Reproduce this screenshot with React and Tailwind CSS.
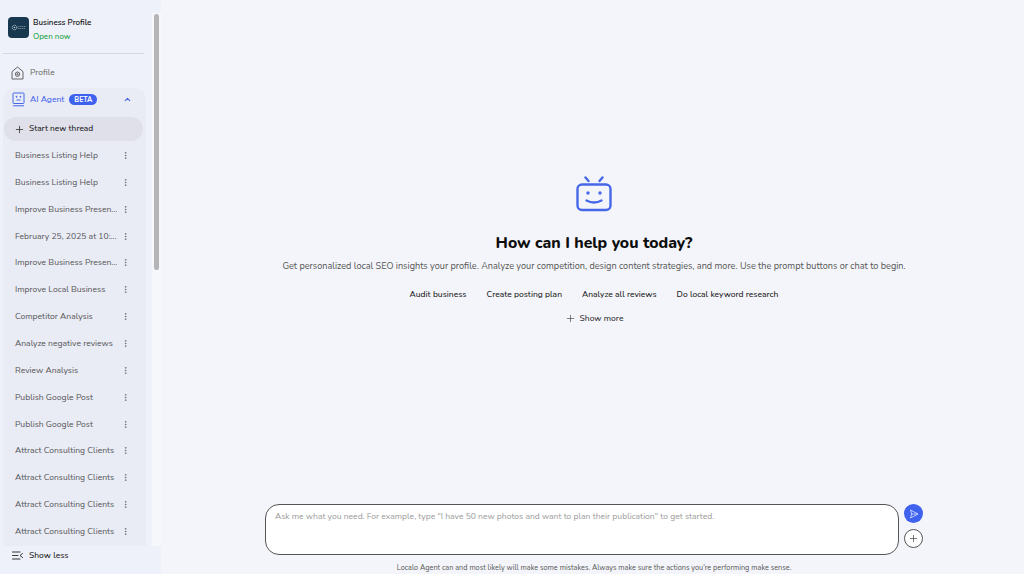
import { Plus, EllipsisVertical, ChevronUp } from "lucide-react";

const threads = [
  "Business Listing Help",
  "Business Listing Help",
  "Improve Business Presen...",
  "February 25, 2025 at 10:...",
  "Improve Business Presen...",
  "Improve Local Business",
  "Competitor Analysis",
  "Analyze negative reviews",
  "Review Analysis",
  "Publish Google Post",
  "Publish Google Post",
  "Attract Consulting Clients",
  "Attract Consulting Clients",
  "Attract Consulting Clients",
  "Attract Consulting Clients",
];

const prompts = ["Audit business", "Create posting plan", "Analyze all reviews", "Do local keyword research"];

function LogoMark() {
  return (
    <svg width="21" height="21" viewBox="0 0 21 21" fill="none">
      <rect width="21" height="21" rx="4" fill="#17384f" />
      <circle cx="6.500" cy="10.500" r="2.300" stroke="#c3ced6" strokeWidth="0.900" strokeDasharray="1.200 0.500" />
      <circle cx="6.500" cy="10.500" r="0.800" fill="#c3ced6" />
      <path d="M10 9.500h8M10 11.500h7" stroke="#7f95a4" strokeWidth="0.800" strokeDasharray="1.500 0.500" />
    </svg>
  );
}

function ProfileIcon() {
  return (
    <svg width="13" height="14" viewBox="0 0 13 14" fill="none" stroke="#555555" strokeWidth="0.900" strokeLinejoin="round">
      <path d="M1 5.600 6.500 1 12 5.600V13H1z" />
      <circle cx="6.500" cy="8.200" r="2.200" />
      <circle cx="6.500" cy="8.200" r="0.700" />
    </svg>
  );
}

function AgentSmallIcon() {
  return (
    <svg width="13" height="15" viewBox="0 0 13 15" fill="none" stroke="#4668e8" strokeWidth="1">
      <rect x="1" y="1" width="11" height="10.500" rx="0.800" />
      <circle cx="4.600" cy="4.800" r="0.500" fill="#4668e8" />
      <circle cx="8.400" cy="4.800" r="0.500" fill="#4668e8" />
      <path d="M4.500 8h4" />
      <path d="M1 13.800h11" />
    </svg>
  );
}

function BotIcon() {
  return (
    <svg width="36" height="36" viewBox="0 0 36 36" fill="none" stroke="#4668e8" strokeWidth="2.400" strokeLinecap="round">
      <rect x="1.500" y="8.500" width="33" height="25.500" rx="4.500" />
      <path d="M9.500 1.500 12.500 5" />
      <path d="M26.500 1.500 23.500 5" />
      <circle cx="12" cy="17" r="1.700" fill="#4668e8" stroke="none" />
      <circle cx="24" cy="17" r="1.700" fill="#4668e8" stroke="none" />
      <path d="M10.500 24.500c4.500 2.400 10.500 2.400 15 0" />
    </svg>
  );
}

function ShowLessIcon() {
  return (
    <svg width="11" height="9" viewBox="0 0 11 9" fill="none" stroke="#222222" strokeWidth="0.900" strokeLinecap="round">
      <path d="M0.500 1h7.500" />
      <path d="M0.500 4.500h5.500" />
      <path d="M0.500 8h7.500" />
      <path d="M10.500 2.500 8 4.500l2.500 2" />
    </svg>
  );
}

function SendIcon() {
  return (
    <svg width="10" height="10" viewBox="0 0 10 10" fill="none" stroke="#dbe2ff" strokeWidth="0.800" strokeLinejoin="round">
      <path d="M1.500 1 9 5 1.500 9 2.700 5z" />
      <path d="M2.700 5H9" />
    </svg>
  );
}

export default function App() {
  return (
    <div className="flex h-screen overflow-hidden bg-[#f4f5fa] font-['Nunito','Lato',sans-serif] text-[#222222]">
      <aside className="flex h-full w-[161px] shrink-0 flex-col bg-[#eef1f9]">
        <div className="flex min-h-0 flex-1">
          <div className="flex w-[152px] shrink-0 flex-col pl-[3px]">
            <div className="flex h-[54px] w-[141px] shrink-0 items-start gap-[4px] border-b border-[#d3d7e3] pl-[5px] pt-[17px]">
              <LogoMark />
              <div className="flex flex-col">
                <span className="text-[8px] leading-[11px] font-semibold text-[#151515]">Business Profile</span>
                <span className="mt-[3px] text-[8px] leading-[11px] font-medium text-[#22a447]">Open now</span>
              </div>
            </div>
            <div className="flex h-[34px] shrink-0 items-center gap-[6px] pl-[8px] pt-[3px]">
              <ProfileIcon />
              <span className="mt-[-1px] text-[8.500px] text-[#666666]">Profile</span>
            </div>
            <div className="flex min-h-0 w-[143px] flex-1 flex-col overflow-hidden rounded-t-[12px] bg-[#e9ebf5]">
              <div className="flex h-[22px] shrink-0 items-center pl-[9px]">
                <AgentSmallIcon />
                <span className="ml-[5px] text-[8.500px] font-medium text-[#4668e8]">AI Agent</span>
                <span className="ml-[5px] rounded-full bg-[#3f62ee] px-[5px] text-[7px] leading-[11px] font-bold text-white">BETA</span>
                <ChevronUp className="ml-[26px] h-[9px] w-[9px] text-[#4668e8]" strokeWidth={3} />
              </div>
              <div className="mx-[1px] mt-[7px] flex h-[24px] w-[139px] shrink-0 items-center rounded-full bg-[#dfe0ea] pl-[10px]">
                <Plus className="h-[11px] w-[11px] text-[#222222]" strokeWidth={1.6} />
                <span className="ml-[4px] text-[8.400px] font-medium text-[#222222]">Start new thread</span>
              </div>
              <div className="flex flex-col pt-[1px]">
                {threads.map((t, i) => (
                  <div key={i} className="flex h-[26.860px] shrink-0 items-center justify-between pl-[12px] pr-[16.500px]">
                    <span className="whitespace-nowrap text-[8.570px] text-[#555555]">{t}</span>
                    <EllipsisVertical className="h-[9px] w-[9px] text-[#666666]" strokeWidth={2} />
                  </div>
                ))}
              </div>
            </div>
          </div>
          <div className="mt-[13px] flex w-[9px] flex-col bg-[#f6f7fb] pl-[2px] pt-[1px]">
            <div className="h-[256px] w-[5px] rounded-full bg-[#b5b5b8]" />
          </div>
        </div>
        <div className="flex h-[28px] shrink-0 items-center gap-[6px] pb-[9px] pl-[12px]">
          <ShowLessIcon />
          <span className="text-[8.500px] font-medium text-[#222222]">Show less</span>
        </div>
      </aside>
      <main className="flex min-w-0 flex-1 flex-col items-center pl-[3px]">
        <div className="mt-[176px] flex flex-col items-center">
          <BotIcon />
          <h1 className="mt-[20px] text-[15.800px] leading-[22px] font-extrabold text-[#0d0d0d]">How can I help you today?</h1>
          <p className="mt-[5px] text-[9.150px] leading-[14px] text-[#555555]">
            Get personalized local SEO insights your profile. Analyze your competition, design content strategies, and more. Use the prompt buttons or chat to begin.
          </p>
          <div className="mt-[14px] flex items-center gap-[20px]">
            {prompts.map((p) => (
              <span key={p} className="text-[8.500px] leading-[14px] font-medium text-[#222222]">{p}</span>
            ))}
          </div>
          <div className="mt-[10px] flex items-center gap-[4px]">
            <Plus className="h-[11px] w-[11px] text-[#333333]" strokeWidth={1.3} />
            <span className="text-[8.500px] leading-[14px] font-medium text-[#333333]">Show more</span>
          </div>
        </div>
        <div className="mt-auto flex items-start gap-[5px]">
          <div className="h-[51px] w-[634px] rounded-[14px] border border-[#555555] bg-white px-[9px] py-[4px] text-[8.550px] leading-[14px] text-[#999999]">
            Ask me what you need. For example, type "I have 50 new photos and want to plan their publication" to get started.
          </div>
          <div className="flex flex-col gap-[6px]">
            <div className="flex h-[19px] w-[19px] items-center justify-center rounded-full bg-[#3f62ee]">
              <SendIcon />
            </div>
            <div className="flex h-[19px] w-[19px] items-center justify-center rounded-full border border-[#555555] bg-white">
              <Plus className="h-[11px] w-[11px] text-[#222222]" strokeWidth={1.3} />
            </div>
          </div>
        </div>
        <p className="mt-[7px] text-[7.300px] leading-[12px] text-[#555555]">
          Localo Agent can and most likely will make some mistakes. Always make sure the actions you're performing make sense.
        </p>
      </main>
    </div>
  );
}
